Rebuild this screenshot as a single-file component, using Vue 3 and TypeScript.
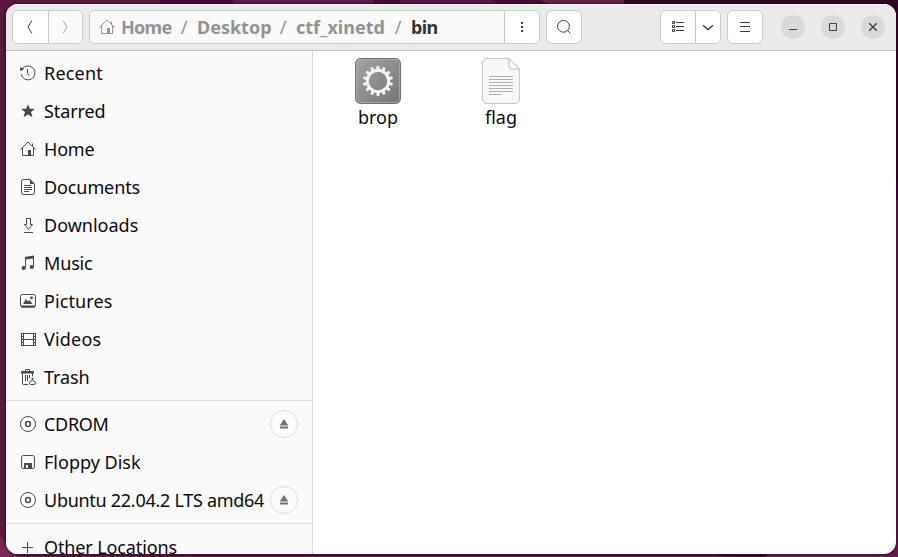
<script setup lang="ts">
interface Place {
  name: string
  icon: string
  spacing: number
  eject?: boolean
}

const groups: Place[][] = [
  [
    { name: 'Recent', icon: 'recent', spacing: 0.2 },
    { name: 'Starred', icon: 'star', spacing: -0.1 },
    { name: 'Home', icon: 'home', spacing: -0.2 },
    { name: 'Documents', icon: 'document', spacing: -0.1 },
    { name: 'Downloads', icon: 'download', spacing: 0 },
    { name: 'Music', icon: 'music', spacing: -0.15 },
    { name: 'Pictures', icon: 'picture', spacing: 0.1 },
    { name: 'Videos', icon: 'video', spacing: 0.2 },
    { name: 'Trash', icon: 'trash', spacing: -0.1 },
  ],
  [
    { name: 'CDROM', icon: 'disc', spacing: -0.3, eject: true },
    { name: 'Floppy Disk', icon: 'floppy', spacing: 0 },
    { name: 'Ubuntu 22.04.2 LTS amd64', icon: 'disc', spacing: -0.28, eject: true },
  ],
  [{ name: 'Other Locations', icon: 'plus', spacing: -0.12 }],
]

const crumbs = [
  { name: 'Home', width: 50, spacing: -0.7 },
  { name: 'Desktop', width: 73, spacing: 0 },
  { name: 'ctf_xinetd', width: 89, spacing: 0 },
  { name: 'bin', width: 26, spacing: -0.6 },
]

const teeth = Array.from({ length: 14 }, (_, i) => (i * 360) / 14)
</script>

<template>
  <div class="desktop">
    <svg class="wallpaper" width="898" height="557" aria-hidden="true">
      <rect width="898" height="557" fill="#571a3e" />
      <path d="M0 0H163V5H0Z" fill="#5a1a40" />
      <path d="M160 0H233V5H160Z" fill="#50064a" />
      <path d="M233 0H374V5H233Z" fill="#641b50" />
      <path d="M374 0H624V5H374Z" fill="#450b3b" />
      <path d="M400 0H490L500 5H400Z" fill="#5d184b" />
      <path d="M540 0H624V5H550Z" fill="#6c2450" />
      <path d="M624 0H898V182H880V10H624Z" fill="#310827" />
      <path d="M890 182H898V200H890Z" fill="#42053d" />
      <path d="M890 200H898V557H890Z" fill="#611d4b" />
      <path d="M0 536L18 557H0Z" fill="#7b2459" />
      <path d="M712 554H766V557H730Z" fill="#430737" />
      <path d="M766 554H898V557H766Z" fill="#5f1f4d" />
    </svg>

    <main class="window">
      <header class="bar">
        <div class="group nav">
          <button class="cell"><svg width="16" height="16" viewBox="0 0 16 16"><path d="M9.8 1.7L6 8L9.8 14.3" /></svg></button>
          <button class="cell off"><svg width="16" height="16" viewBox="0 0 16 16"><path d="M6.2 1.7L10 8L6.2 14.3" /></svg></button>
        </div>

        <div class="group path">
          <div class="crumbs">
            <svg class="crumb-home" width="16" height="16" viewBox="0 0 16 16">
              <path d="M.5 8.5L8 1L15.5 8.5M2.5 7V14.5H13.5V7M12.5 2.5V5" />
              <path class="solid" d="M8 9h3v6H8z" />
            </svg>
            <template v-for="(c, i) in crumbs" :key="c.name">
              <span v-if="i" class="slash">/</span>
              <span class="crumb" :class="{ current: i === crumbs.length - 1 }" :style="{ width: c.width + 'px', letterSpacing: c.spacing + 'px' }">{{ c.name }}</span>
            </template>
          </div>
          <button class="cell"><svg width="16" height="16" viewBox="0 0 16 16"><path class="solid" d="M7 3h2v2H7zM7 7h2v2H7zM7 11h2v2H7z" /></svg></button>
        </div>

        <button class="group single"><svg width="16" height="16" viewBox="0 0 16 16"><circle cx="7.5" cy="7.3" r="5.9" /><path d="M11.5 11.5L14.5 14.3" /></svg></button>

        <div class="group view">
          <button class="cell"><svg width="16" height="16" viewBox="0 0 16 16"><path d="M2.5 2.5h2v2h-2zM2.5 6.5h2v2h-2zM2.5 10.5h2v2h-2zM6 3.5h8M6 7.5h8M6 11.5h8" /></svg></button>
          <button class="cell slim"><svg width="16" height="16" viewBox="0 0 16 16"><path class="mid" d="M3 6.2L8 10.5L13 6.2" /></svg></button>
        </div>
        <button class="group single menu"><svg width="16" height="16" viewBox="0 0 16 16"><path d="M3 3.5h10M3 7.5h10M3 12.5h10" /></svg></button>

        <div class="controls">
          <button><svg width="16" height="16" viewBox="0 0 16 16"><path d="M4 10.5h8" /></svg></button>
          <button><svg width="16" height="16" viewBox="0 0 16 16"><path d="M4.5 4.5h7v7h-7z" /></svg></button>
          <button><svg width="16" height="16" viewBox="0 0 16 16"><path class="mid" d="M4.2 4.2l7.6 7.6M11.8 4.2l-7.6 7.6" /></svg></button>
        </div>
      </header>

      <div class="body">
        <aside class="sidebar">
          <ul v-for="(g, gi) in groups" :key="gi" class="places">
            <li v-for="p in g" :key="p.name" class="place">
              <svg class="icon" width="16" height="16" viewBox="0 0 16 16">
                <template v-if="p.icon === 'recent'"><path d="M2.2 4A7 7 0 1 1 1.1 9M7.5 4v4.500l2 2" /><path class="solid" d="M0 2.500L3.800 3.200L2.600 5.500H0Z" /></template>
                <path v-else-if="p.icon === 'star'" class="solid" d="M8 1.300L9.900 5.800H15L11 9.100L12.500 14.300L8 11.400L3.500 14.300L5 9.100L1 5.800H6.100Z" />
                <template v-else-if="p.icon === 'home'"><path d="M.5 8.500L8 1L15.500 8.500M2.500 7V14.500H13.500V7M12.500 2.500V5" /><path class="solid" d="M8 9h3v6H8z" /></template>
                <template v-else-if="p.icon === 'document'"><path d="M10 .5H3.500Q1.500 .5 1.500 2.500V13.500Q1.500 15.500 3.500 15.500H12.500Q14.500 15.500 14.500 13.500V5M4 6.500h7M4 8.500h8M4 10.500h8M4 12.500h5" /><path class="solid" d="M10 0L15 5H10Z" /></template>
                <path v-else-if="p.icon === 'download'" d="M6.500 1.500h4v6h2L8.500 12.500L4.500 7.500h2zM4 15.500h9" />
                <template v-else-if="p.icon === 'music'"><path d="M5.500 12.500V2.500L13.500 1.500V11.500" /><path class="solid" d="M5 2L14 .5V3.500L5 4.500Z" /><ellipse class="solid" cx="3.700" cy="13" rx="2.200" ry="1.900" /><ellipse class="solid" cx="11.800" cy="12" rx="2.200" ry="1.900" /></template>
                <template v-else-if="p.icon === 'picture'"><rect x=".5" y="1.500" width="15" height="12.500" rx="2" /><path class="solid" d="M1 12.500h14v2H1zM3 11L6 6L8 8.500L9.500 7L12.500 11z" /><circle class="solid" cx="11.500" cy="4.800" r="1.400" /></template>
                <path v-else-if="p.icon === 'video'" d="M1.500 2v13M3.500 2v13M13.500 2v13M15.500 2v13M3.500 2.500h10M3.500 8.500h10M3.500 14.500h10M1 2.500h3M1 5.500h3M1 8.500h3M1 11.500h3M1 14.500h3M13 2.500h3M13 5.500h3M13 8.500h3M13 11.500h3M13 14.500h3" />
                <template v-else-if="p.icon === 'trash'"><path d="M5.500 2.500V.5h4v2M2.500 4v10.500Q2.500 15.500 3.500 15.500H8M12.500 4v3.500M5.500 6v6M7.500 6v6M9.500 6v3M11.500 9.500h2M12.500 9.500v1.500L10 12.500Q8.500 15.500 10.500 15.500H14Q16.200 15.500 15.200 13L12.500 11" /><path class="solid" d="M1 3Q1 2 2 2H13Q14 2 14 3V4.500H1z" /></template>
                <template v-else-if="p.icon === 'disc'"><circle cx="8" cy="8" r="7.500" /><circle class="thick" cx="8" cy="8" r="2.400" /></template>
                <template v-else-if="p.icon === 'floppy'"><rect x="1.500" y="1.500" width="13" height="13" rx="2" /><path class="solid" fill-rule="evenodd" d="M4 9h8v6H4zM6 11v3h2v-3z" /></template>
                <path v-else d="M2 8.500h11M7.500 3v11" />
              </svg>
              <span class="label" :style="{ letterSpacing: p.spacing + 'px' }">{{ p.name }}</span>
              <button v-if="p.eject" class="eject"><svg width="16" height="16" viewBox="0 0 16 16"><path d="M8 3L12.300 9.500H3.700ZM4 10.500h8v2H4z" /></svg></button>
            </li>
          </ul>
        </aside>

        <section class="files">
          <figure class="file">
            <svg width="48" height="48" viewBox="0 0 48 48">
              <defs>
                <linearGradient id="metal" x1="0" y1="0" x2="1" y2="1"><stop offset="0" stop-color="#a4a4a4" /><stop offset="1" stop-color="#757575" /></linearGradient>
              </defs>
              <rect x="1.500" y="1.500" width="45" height="45" rx="5" fill="url(#metal)" stroke="#6f6f6f" />
              <rect x="2.500" y="2.500" width="43" height="43" rx="4" fill="none" stroke="#b0b0b0" stroke-opacity=".75" />
              <g fill="#f5f5f3">
                <path v-for="a in teeth" :key="a" d="M22.500 12.500V9.800Q22.500 9 23.300 9H24.700Q25.500 9 25.500 9.800V12.500Z" :transform="`rotate(${a} 24 24)`" />
              </g>
              <circle cx="24" cy="24" r="10.700" fill="none" stroke="#f5f5f3" stroke-width="2.900" />
            </svg>
            <figcaption>brop</figcaption>
          </figure>
          <figure class="file">
            <svg width="48" height="48" viewBox="0 0 48 48">
              <path d="M10 1.500H32L42.500 12V42Q42.500 46.500 38 46.500H10Q5.500 46.500 5.500 42V6Q5.500 1.500 10 1.500Z" fill="#f7f7f7" stroke="#c6c6c6" />
              <path d="M32 1.500V9Q32 12 35 12H42.500Z" fill="#fff" stroke="#bdbdbd" />
              <path d="M12 19.500H36M12 22.500H36M12 25.500H36M12 28.500H36M12 31.500H36M12 34.500H36M12 37.500H24" stroke="#b0b0ad" />
            </svg>
            <figcaption>flag</figcaption>
          </figure>
        </section>
      </div>
    </main>
  </div>
</template>

<style>
body { margin: 0; overflow: hidden; }
</style>

<style scoped>
* { box-sizing: border-box; }
.desktop { position: relative; width: 898px; height: 557px; padding: 4px 2px 3px 6px; overflow: hidden; font: 18px "Noto Sans", sans-serif; color: #0b0b0b; }
.wallpaper { position: absolute; inset: 0; }
.window { position: relative; width: 890px; height: 550px; border-radius: 12px; background: #fff; overflow: hidden; box-shadow: 0 0 3px 1px rgba(20, 0, 15, .55); display: flex; flex-direction: column; }
button { appearance: none; border: 0; padding: 0; margin: 0; display: flex; align-items: center; justify-content: center; background: #fff; }
svg { display: block; flex: none; }
.bar { height: 47px; flex: none; display: flex; align-items: flex-start; padding: 6px 11px 0 6px; background: #ebebeb; border-bottom: 1px solid #bfbfbf; box-shadow: inset 0 1px #f8f8f8; }
.group { height: 34px; display: flex; border: 1px solid #c9c9c9; border-radius: 6px; background: #fff; overflow: hidden; }
.bar svg { fill: none; stroke: #3d3d3d; stroke-width: 1; }
.bar svg .solid { fill: #3d3d3d; stroke: none; }
.bar svg .mid { stroke-width: 1.4; }
.icon { fill: none; stroke: #4a4a4a; stroke-width: 1; }
.icon .solid { fill: #4a4a4a; stroke: none; }
.icon .thick { stroke-width: 1.5; }
.cell { width: 35px; }
.cell + .cell, .crumbs + .cell { border-left: 1px solid #c9c9c9; }
.nav { width: 71px; }
.nav .off { background: #fafafa; }
.bar .off svg { stroke: #a0a0a0; }
.path { width: 451px; margin-left: 6px; }
.crumbs { width: 414px; display: flex; align-items: center; padding-left: 9px; background: #fafafa; font-weight: 700; color: #929292; }
.path .cell { width: 35px; }
.bar .crumb-home { stroke: #929292; margin-right: 6px; }
.bar .crumb-home .solid { fill: #929292; }
.crumb { flex: none; white-space: nowrap; }
.crumb.current { color: #353535; }
.slash { width: 26px; flex: none; text-align: center; font-weight: 400; }
.single { width: 36px; margin-left: 6px; align-items: center; }
.view { width: 61px; margin-left: 78px; }
.view .slim { width: 25px; }
.view .cell:first-child { width: 34px; }
.controls { display: flex; gap: 16px; margin: 5px 0 0 18px; }
.controls button { width: 24px; height: 24px; border-radius: 50%; background: #dadada; }
.body { flex: 1; min-height: 0; display: flex; }
.sidebar { width: 307px; flex: none; overflow: hidden; padding-top: 3px; background: #fafafa; border-right: 1px solid #d5d5d5; }
.places { list-style: none; margin: 0; padding: 0; }
.places + .places { margin-top: 4px; padding-top: 4px; border-top: 1px solid #dcdcdc; }
.place { height: 38px; display: flex; align-items: center; padding: 0 14px; }
.icon { margin-right: 8px; }
.label { white-space: nowrap; line-height: 38px; }
.eject { width: 28px; height: 28px; margin-left: auto; flex: none; border: 1px solid #dedede; border-radius: 50%; background: #fcfcfc; }
.eject svg { fill: #707070; }
.files { flex: 1; display: flex; align-items: flex-start; padding: 6px 0 0 3px; }
.file { width: 123px; margin: 0; display: flex; flex-direction: column; align-items: center; }
figcaption { line-height: 24px; padding-left: 1px; }
</style>
